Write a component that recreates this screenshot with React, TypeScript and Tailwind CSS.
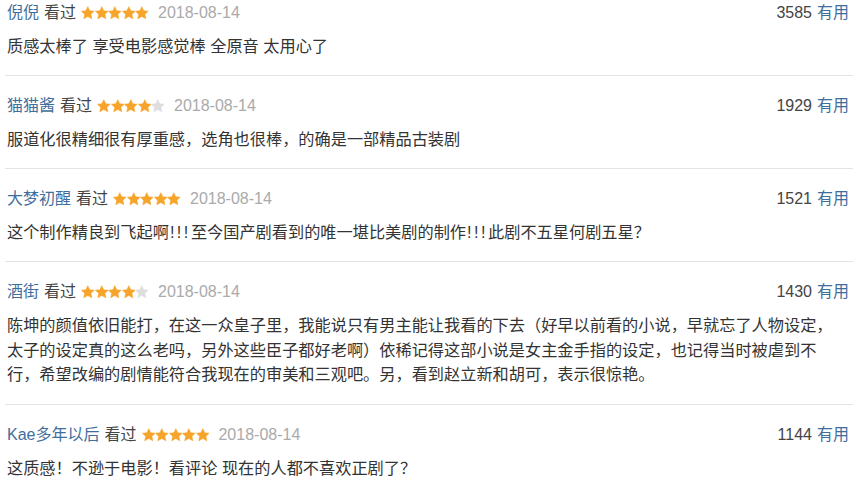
import React from "react";

type Review = { name: string; stars: number; date: string; count: string; text: React.ReactNode };

const Bang = () => <span className="tracking-[2.5px] pl-[1px]">!!!</span>;

const reviews: Review[] = [
  { name: "倪倪", stars: 5, date: "2018-08-14", count: "3585", text: "质感太棒了 享受电影感觉棒 全原音 太用心了" },
  { name: "猫猫酱", stars: 4, date: "2018-08-14", count: "1929", text: "服道化很精细很有厚重感，选角也很棒，的确是一部精品古装剧" },
  {
    name: "大梦初醒",
    stars: 5,
    date: "2018-08-14",
    count: "1521",
    text: (
      <>
        这个制作精良到飞起啊<Bang />至今国产剧看到的唯一堪比美剧的制作<Bang />此剧不五星何剧五星？
      </>
    ),
  },
  {
    name: "酒街",
    stars: 4,
    date: "2018-08-14",
    count: "1430",
    text: "陈坤的颜值依旧能打，在这一众皇子里，我能说只有男主能让我看的下去（好早以前看的小说，早就忘了人物设定，太子的设定真的这么老吗，另外这些臣子都好老啊）依稀记得这部小说是女主金手指的设定，也记得当时被虐到不行，希望改编的剧情能符合我现在的审美和三观吧。另，看到赵立新和胡可，表示很惊艳。",
  },
  { name: "Kae多年以后", stars: 5, date: "2018-08-14", count: "1144", text: "这质感！不逊于电影！看评论 现在的人都不喜欢正剧了？" },
];

function Star({ filled }: { filled: boolean }) {
  return (
    <svg width="13.6" height="14" viewBox="0 0 24 24" className="shrink-0">
      <path
        d="M12 0.8l3.4 7.2 7.9.9-5.8 5.4 1.6 7.9L12 18.3l-7.1 3.9 1.6-7.9L0.7 8.9l7.9-.9z"
        fill={filled ? "#f7a52a" : "#dedede"}
        stroke={filled ? "#f7a52a" : "#dedede"}
        strokeWidth="1"
        strokeLinejoin="round"
      />
    </svg>
  );
}

export default function App() {
  return (
    <div
      className="w-[865px] h-[482px] overflow-hidden bg-white"
      style={{ fontFamily: '"Liberation Sans", "Noto Sans CJK SC", sans-serif' }}
    >
      <div className="pl-[5px] pr-[12px] pt-[1px]">
        {reviews.map((r, i) => (
          <div
            key={i}
            className={
              i === 0
                ? "pt-0 pb-[16.5px]"
                : "border-t border-[#e3e3e3] pt-[18px] pb-[16.7px]"
            }
          >
            <div className="h-[24px] flex items-center text-[16px] pl-[2px]">
              <span className="text-[#3f6e9c]">{r.name}</span>
              <span className="ml-[5px] text-[#444]">看过</span>
              <span className="ml-[5px] flex items-center">
                {[0, 1, 2, 3, 4].map((k) => (
                  <Star key={k} filled={k < r.stars} />
                ))}
              </span>
              <span className="ml-[9px] text-[#aaa] text-[16px]">{r.date}</span>
              <span className="ml-auto text-[#444] text-[16px]">{r.count}</span>
              <span className="ml-[5px] text-[#3f6e9c] mr-[4px]">有用</span>
            </div>
            <div className="mt-[9px] text-[16.2px] leading-[24.5px] text-[#333] pl-[2px] pr-[14px]">
              {r.text}
            </div>
          </div>
        ))}
      </div>
    </div>
  );
}
